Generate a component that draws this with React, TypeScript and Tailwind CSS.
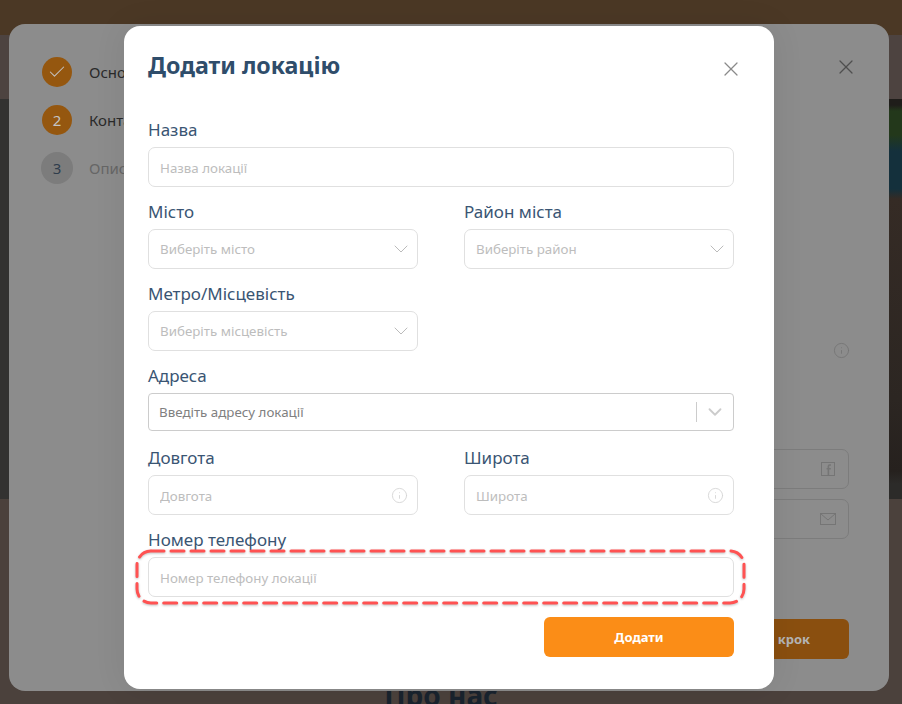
import { Check, ChevronDown, Info, X } from "lucide-react";

const labelCls = "block h-6 mb-[5px] text-[17px] leading-6 text-[#3a5573]";
const inputCls =
  "h-10 w-full rounded-[7px] border border-[#e0e0e0] bg-white px-[11px] pt-[2px] text-[13.33px] text-[#444] outline-none placeholder:text-[#bdbdbd]";

function TextField({ label, placeholder, info }: { label: string; placeholder: string; info?: boolean }) {
  return (
    <div className="mb-[13px] min-w-0">
      <label className={labelCls}>{label}</label>
      <div className="relative">
        <input className={inputCls} placeholder={placeholder} />
        {info && (
          <Info size={17} strokeWidth={1.25} className="absolute right-[10px] top-[12px] text-[#d4d4d4]" />
        )}
      </div>
    </div>
  );
}

function SelectField({ label, placeholder }: { label: string; placeholder: string }) {
  return (
    <div className="mb-[13px] min-w-0">
      <label className={labelCls}>{label}</label>
      <div className="flex h-10 items-center justify-between rounded-[7px] border border-[#e0e0e0] bg-white pl-[11px] pr-[4px]">
        <span className="pt-[2px] text-[13.33px] text-[#bdbdbd]">{placeholder}</span>
        <ChevronDown size={24} strokeWidth={1} className="text-[#bbbbbb]" />
      </div>
    </div>
  );
}

function FacebookIcon() {
  return (
    <svg width="14" height="14" viewBox="0 0 14 14" fill="none" stroke="#757575" strokeWidth="1">
      <rect x="0.5" y="0.5" width="13" height="13" />
      <path d="M10 3H8.6C7.8 3 7.4 3.5 7.4 4.3V13.5M5.6 6.7H9.8" strokeWidth="1.6" />
    </svg>
  );
}

function MailIcon() {
  return (
    <svg width="16" height="12" viewBox="0 0 16 12" fill="none" stroke="#757575" strokeWidth="1">
      <rect x="0.5" y="0.5" width="15" height="11" />
      <path d="M0.5 0.5L8 7L15.5 0.5" />
    </svg>
  );
}

export default function App() {
  return (
    <div className="relative h-[704px] w-full overflow-hidden bg-[#4b413c] font-['Noto_Sans','Open_Sans',sans-serif]">
      {/* dimmed page behind the modals */}
      <div className="h-[35px] bg-[#4b3825]" />
      <div className="h-[64px] bg-[#4d4340]" />
      <div className="flex h-[400px] justify-between bg-[#333231]">
        <div className="w-[9px]" />
        <div className="h-full w-[13px] bg-[linear-gradient(180deg,#1f1d1a_0,#1f1d1a_6px,#23381b_12px,#23381b_36px,#14303c_52px,#14303c_90px,#352b25_100px,#2c2622_300px,#26211e_372px,#2c2b29_385px)]" />
      </div>
      <div className="absolute bottom-[-9px] left-0 right-0 text-center">
        <span className="ml-[-20px] text-[28px] font-bold leading-[36px] text-[#19232e]">Про нас</span>
      </div>

      {/* first modal (dimmed) */}
      <div className="absolute left-[9px] top-[24px] flex h-[667px] w-[880px] justify-between rounded-[16px] bg-[#8c8c8c] pl-[33px] pr-[40px] pt-[33px]">
        <div className="flex flex-col items-start gap-[18px] text-[15px]">
          <div className="flex h-[30px] items-center gap-[17px]">
            <span className="flex h-[30px] w-[30px] items-center justify-center rounded-full bg-[#95570f] text-[#c4c4c4]">
              <Check size={20} strokeWidth={1.25} />
            </span>
            <span className="text-[#2a2a2a]">Основне</span>
          </div>
          <div className="flex h-[30px] items-center gap-[17px]">
            <span className="flex h-[30px] w-[30px] items-center justify-center rounded-full bg-[#95570f] text-[#c4c4c4]">
              2
            </span>
            <span className="text-[#2a2a2a]">Контакти</span>
          </div>
          <div className="ml-[-1px] mt-[-1px] flex h-[32px] items-center gap-[16px]">
            <span className="flex h-[32px] w-[32px] items-center justify-center rounded-full bg-[#7c7c7c] text-[#2f3d4c]">
              3
            </span>
            <span className="text-[#666666]">Опис</span>
          </div>
        </div>
        <div className="flex w-[300px] flex-col items-end">
          <X size={24} strokeWidth={1.25} className="mr-[-9px] mt-[-2px] text-[#4f4f4f]" />
          <Info size={17} strokeWidth={1.25} className="mr-[-1px] mt-[263px] text-[#757575]" />
          <div className="mt-[90px] flex h-10 w-full items-center justify-end rounded-[7px] border border-[#7c7c7c] pr-[13px]">
            <FacebookIcon />
          </div>
          <div className="mt-[10px] flex h-10 w-full items-center justify-end rounded-[7px] border border-[#7c7c7c] pr-[12px]">
            <MailIcon />
          </div>
          <button className="mt-[80px] h-10 w-full rounded-[6px] bg-[#8a4f0f] pr-[39px] pt-[1px] text-right text-[13px] font-bold text-[#b4b4b4]">
            Наступний крок
          </button>
        </div>
      </div>

      {/* add location modal */}
      <div className="absolute left-[124px] top-[26px] h-[663px] w-[650px] rounded-[16px] bg-white pl-[24px] pr-[40px] pt-[23px] shadow-[0_0_32px_rgba(0,0,0,0.08)]">
        <div className="mb-[37px] flex h-[32px] items-center justify-between">
          <h2 className="text-[23.2px] font-bold leading-8 text-[#2f4d6b]">Додати локацію</h2>
          <X size={24} strokeWidth={1.25} className="mr-[-9px] mt-[8px] text-[#8a8a8a]" />
        </div>

        <TextField label="Назва" placeholder="Назва локації" />

        <div className="grid grid-cols-2 gap-x-[46px]">
          <SelectField label="Місто" placeholder="Виберіть місто" />
          <SelectField label="Район міста" placeholder="Виберіть район" />
          <SelectField label="Метро/Місцевість" placeholder="Виберіть місцевість" />
        </div>

        <div className="mb-[15px]">
          <label className={labelCls}>Адреса</label>
          <div className="flex h-[38px] items-center rounded-[4px] border border-[#cccccc] bg-white pl-[10px]">
            <span className="flex-1 pt-[1px] text-[13.33px] text-[#808080]">Введіть адресу локації</span>
            <span className="h-5 w-px bg-[#cccccc]" />
            <span className="flex w-[36px] justify-center">
              <ChevronDown size={22} strokeWidth={2} className="text-[#cccccc]" />
            </span>
          </div>
        </div>

        <div className="grid grid-cols-2 gap-x-[46px]">
          <TextField label="Довгота" placeholder="Довгота" info />
          <TextField label="Широта" placeholder="Широта" info />
        </div>

        <div className="mb-[20px]">
          <label className={labelCls}>Номер телефону</label>
          <input className={inputCls} placeholder="Номер телефону локації" />
        </div>

        <div className="flex justify-end">
          <button className="h-10 w-[190px] rounded-[6px] bg-[#fb8d17] pt-[1px] text-[13px] font-bold text-white">
            Додати
          </button>
        </div>
      </div>

      {/* red dashed annotation */}
      <svg
        className="pointer-events-none absolute left-[130px] top-[544px] drop-shadow-[0_1px_1px_rgba(0,0,0,0.25)]"
        width="622"
        height="66"
        fill="none"
      >
        <rect
          x="7"
          y="7"
          width="607"
          height="52"
          rx="14"
          stroke="#ff5252"
          strokeWidth="3"
          strokeDasharray="13 7"
          strokeLinecap="round"
        />
      </svg>
    </div>
  );
}
